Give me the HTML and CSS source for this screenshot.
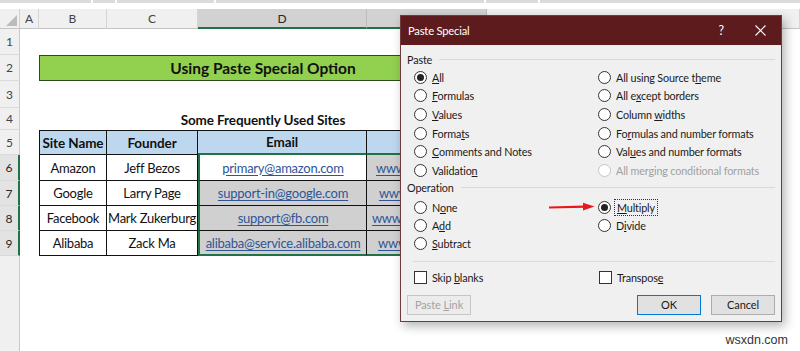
FILE: index.html
```html
<!DOCTYPE html>
<html>
<head>
<meta charset="utf-8">
<link rel="stylesheet" href="styles.css">
</head>
<body>
<div class="screen">
  <div class="topstrip">
    <span class="seg s1"></span><span class="seg s2"></span><span class="seg s3"></span><span class="seg s4"></span><span class="seg s5"></span><span class="seg s6"></span>
  </div>
  <div class="sheet">
    <div class="row hdr-row">
      <div class="corner w-rh"><span class="tri"></span></div>
      <div class="ch w-a">A</div>
      <div class="ch w-b">B</div>
      <div class="ch w-c">C</div>
      <div class="ch w-d sel">D</div>
      <div class="ch w-e sel">E</div>
      <div class="ch w-rest"></div>
    </div>
    <div class="row h1">
      <div class="rh">1</div>
    </div>
    <div class="row h2">
      <div class="rh">2</div>
      <div class="w-a"></div>
      <div class="title">Using Paste Special Option</div>
    </div>
    <div class="row h3">
      <div class="rh">3</div>
    </div>
    <div class="row h4">
      <div class="rh">4</div>
      <div class="w-a"></div>
      <div class="caption">Some Frequently Used Sites</div>
    </div>
    <div class="row h5">
      <div class="rh">5</div>
      <div class="w-a"></div>
      <div class="t th top first w-b">Site Name</div>
      <div class="t th top w-c">Founder</div>
      <div class="t th top w-d sel-b">Email</div>
      <div class="t th top w-e sel-b">Site Link</div>
    </div>
    <div class="row h6">
      <div class="rh rsel">6</div>
      <div class="w-a"></div>
      <div class="t first w-b">Amazon</div>
      <div class="t w-c">Jeff Bezos</div>
      <div class="t w-d sel-l"><span class="link">primary@amazon.com</span></div>
      <div class="t g w-e"><span class="link">www.amazon.com</span></div>
    </div>
    <div class="row h7">
      <div class="rh rsel">7</div>
      <div class="w-a"></div>
      <div class="t first w-b">Google</div>
      <div class="t w-c">Larry Page</div>
      <div class="t g w-d sel-l"><span class="link">support-in@google.com</span></div>
      <div class="t g w-e"><span class="link">www.google.com</span></div>
    </div>
    <div class="row h8">
      <div class="rh rsel">8</div>
      <div class="w-a"></div>
      <div class="t first w-b">Facebook</div>
      <div class="t w-c">Mark Zukerburg</div>
      <div class="t g w-d sel-l"><span class="link">support@fb.com</span></div>
      <div class="t g w-e"><span class="link">www.facebook.com</span></div>
    </div>
    <div class="row h9">
      <div class="rh rsel">9</div>
      <div class="w-a"></div>
      <div class="t first w-b">Alibaba</div>
      <div class="t w-c">Zack Ma</div>
      <div class="t g w-d sel-l sel-b"><span class="link">alibaba@service.alibaba.com</span></div>
      <div class="t g w-e sel-b"><span class="link">www.alibaba.com</span></div>
    </div>
    <div class="row filler">
      <div class="rh"></div>
    </div>
  </div>

  <div class="dialog">
    <div class="dlg-title">
      <span class="dlg-name">Paste Special</span>
      <span class="help">?</span>
      <svg class="close" width="11" height="11" viewBox="0 0 11 11"><path d="M0.5 0.5 L10.5 10.5 M10.5 0.5 L0.5 10.5" stroke="#fff" stroke-width="1.1" fill="none"/></svg>
    </div>
    <div class="dlg-body">
      <div class="group-label">Paste</div>
      <div class="opts paste">
        <div class="opt"><span class="radio on"></span><span><u>A</u>ll</span></div>
        <div class="opt"><span class="radio"></span><span><u>F</u>ormulas</span></div>
        <div class="opt"><span class="radio"></span><span><u>V</u>alues</span></div>
        <div class="opt"><span class="radio"></span><span>Forma<u>t</u>s</span></div>
        <div class="opt"><span class="radio"></span><span><u>C</u>omments and Notes</span></div>
        <div class="opt"><span class="radio"></span><span>Validatio<u>n</u></span></div>
        <div class="opt"><span class="radio"></span><span>All using Source t<u>h</u>eme</span></div>
        <div class="opt"><span class="radio"></span><span>All e<u>x</u>cept borders</span></div>
        <div class="opt"><span class="radio"></span><span>Column <u>w</u>idths</span></div>
        <div class="opt"><span class="radio"></span><span>Fo<u>r</u>mulas and number formats</span></div>
        <div class="opt"><span class="radio"></span><span>Val<u>u</u>es and number formats</span></div>
        <div class="opt disabled"><span class="radio"></span><span>All mer<u>g</u>ing conditional formats</span></div>
      </div>
      <div class="group-label">Operation</div>
      <div class="opts op">
        <div class="opt"><span class="radio"></span><span>N<u>o</u>ne</span></div>
        <div class="opt"><span class="radio"></span><span>A<u>d</u>d</span></div>
        <div class="opt"><span class="radio"></span><span><u>S</u>ubtract</span></div>
        <div class="opt"><span class="radio on"></span><span class="focus"><u>M</u>ultiply</span></div>
        <div class="opt"><span class="radio"></span><span>D<u>i</u>vide</span></div>
        <svg class="arrow" width="46" height="10" viewBox="0 0 46 10"><path d="M0 5.5 L36 4.6" stroke="#e8171b" stroke-width="2.2" fill="none"/><path d="M34 0.8 L45.5 4.6 L34 8.6 Z" fill="#e8171b"/></svg>
      </div>
      <div class="sep"></div>
      <div class="checks">
        <div class="opt"><span class="check"></span><span>Skip <u>b</u>lanks</span></div>
        <div class="opt"><span class="check"></span><span>Transpos<u>e</u></span></div>
      </div>
      <div class="buttons">
        <button class="btn disabled">Paste <u>L</u>ink</button>
        <span class="spacer"></span>
        <button class="btn default">OK</button>
        <button class="btn">Cancel</button>
      </div>
    </div>
  </div>

  <div class="watermark">wsxdn.com</div>
</div>
</body>
</html>
```

FILE: styles.css
```css
* { box-sizing: border-box; }
html, body { margin: 0; padding: 0; }
body {
  width: 800px;
  height: 351px;
  overflow: hidden;
  background: #ffffff;
  font-family: Lato, "Open Sans", sans-serif;
}
.screen {
  position: relative;
  width: 800px;
  height: 351px;
  display: flex;
  flex-direction: column;
}

/* top strip */
.topstrip {
  height: 9px;
  display: flex;
  gap: 2px;
  align-items: flex-start;
  flex: none;
}
.seg { height: 3px; background: #dcdcdc; display: block; }
.s1 { width: 91px; }
.s2 { width: 22px; }
.s3 { width: 97px; }
.s4 { width: 268px; }
.s5 { width: 52px; }
.s6 { flex: 1; }

/* sheet */
.sheet { flex: 1; display: flex; flex-direction: column; }
.row { display: flex; flex: none; }
.hdr-row { height: 20px; }
.h1 { height: 26px; }
.h2 { height: 26px; }
.h3 { height: 27px; }
.h4 { height: 22px; }
.h5 { height: 25px; }
.h6 { height: 26px; }
.h7 { height: 25px; }
.h8 { height: 25px; }
.h9 { height: 25px; }
.filler { flex: 1; }

.w-rh { width: 20px; flex: none; }
.w-a { width: 19px; flex: none; }
.w-b { width: 68px; flex: none; }
.w-c { width: 91px; flex: none; }
.w-d { width: 169px; flex: none; }
.w-e { width: 120px; flex: none; }
.w-rest { flex: 1; }

.corner {
  background: #f0f0f0;
  border-right: 1px solid #d0d0d0;
  border-bottom: 1px solid #c4c4c4;
  display: flex;
  align-items: flex-end;
  justify-content: flex-end;
  padding: 0 2px 2px 0;
}
.tri {
  width: 11px;
  height: 11px;
  background: #bcbcbc;
  clip-path: polygon(100% 0, 100% 100%, 0 100%);
}
.ch {
  background: #f0f0f0;
  border-right: 1px solid #d4d4d4;
  border-bottom: 1px solid #c4c4c4;
  font-size: 12px;
  color: #444;
  display: flex;
  align-items: center;
  justify-content: center;
}
.ch.sel {
  background: #d2d2d2;
  border-bottom: 2px solid #217346;
  color: #262626;
  border-right-color: #bdbdbd;
}
.rh {
  width: 20px;
  flex: none;
  background: #f0f0f0;
  border-right: 1px solid #c8c8c8;
  border-bottom: 1px solid #dadada;
  font-size: 12px;
  color: #444;
  display: flex;
  align-items: center;
  justify-content: center;
}
.filler .rh { border-bottom: none; }
.rh.rsel {
  background: #e3e3e3;
  border-right: 2px solid #217346;
  color: #262626;
}

.title {
  width: 448px;
  flex: none;
  background: #92d050;
  border: 1px solid #2e4a1e;
  font-weight: 700;
  font-size: 15.5px;
  color: #111;
  display: flex;
  align-items: center;
  justify-content: center;
}
.caption {
  width: 448px;
  flex: none;
  font-weight: 700;
  font-size: 13.5px;
  letter-spacing: -0.1px;
  color: #111;
  display: flex;
  align-items: center;
  justify-content: center;
  padding-top: 1px;
}

.t {
  border-right: 1px solid #111;
  border-bottom: 1px solid #111;
  font-size: 13px;
  letter-spacing: -0.25px;
  color: #111;
  display: flex;
  align-items: center;
  justify-content: center;
  white-space: nowrap;
  overflow: hidden;
  background: #fff;
}
.t.first { border-left: 1px solid #111; }
.t.top { border-top: 1px solid #111; }
.th { background: #bdd7ee; font-weight: 700; font-size: 13.5px; letter-spacing: -0.1px; }
.t.g { background: #d0d0d0; }
.t.sel-l { border-left: 2px solid #217346; }
.t.sel-b { border-bottom: 2px solid #217346; }
.link { color: #2f5597; text-decoration: underline; text-underline-offset: 2px; }

/* dialog */
.dialog {
  position: absolute;
  left: 400px;
  top: 15px;
  width: 382px;
  height: 307px;
  background: #f0f0f0;
  border: 1px solid #6e3a3b;
  box-shadow: 3px 4px 10px rgba(0, 0, 0, 0.3);
  display: flex;
  flex-direction: column;
  font-family: Lato, "Open Sans", sans-serif;
  font-size: 10.8px;
  letter-spacing: -0.15px;
  line-height: 13px;
  color: #1a1a1a;
}
.dlg-title {
  height: 29px;
  flex: none;
  background: #5e1b1d;
  color: #fff;
  display: flex;
  align-items: center;
  padding-left: 7px;
  font-size: 11.2px;
  letter-spacing: -0.2px;
}
.dlg-name { flex: 1; }
.help { margin-right: 31px; font-size: 12.5px; }
.close { margin-right: 15px; }

.dlg-body {
  flex: 1;
  display: flex;
  flex-direction: column;
  padding: 0 6px 0 6px;
}
.group-label {
  display: flex;
  align-items: center;
  height: 14px;
  gap: 7px;
}
.group-label::after {
  content: "";
  flex: 1;
  border-top: 1px solid #d9d9d9;
}
.group-label:first-child { margin-top: 7px; }

.opts {
  display: grid;
  grid-template-columns: 184px 1fr;
  grid-auto-flow: column;
  margin-left: 7px;
  position: relative;
}
.paste {
  grid-template-rows: repeat(6, 18.6px);
  margin-top: 2px;
  margin-bottom: 1px;
}
.op {
  grid-template-rows: repeat(3, 18px);
  margin-top: 4px;
}
.opt {
  display: flex;
  align-items: center;
  gap: 5px;
  white-space: nowrap;
}
.opt u { text-underline-offset: 1px; }
.radio {
  width: 13px;
  height: 13px;
  border: 1px solid #333;
  border-radius: 50%;
  background: #fff;
  display: flex;
  align-items: center;
  justify-content: center;
  flex: none;
}
.radio.on::after {
  content: "";
  width: 7px;
  height: 7px;
  border-radius: 50%;
  background: #222;
}
.opt.disabled { color: #a0a0a0; }
.opt.disabled .radio { border-color: #c4c4c4; }
.focus {
  outline: 1px dotted #333;
  outline-offset: 1px;
  padding: 0 1px;
}
.arrow {
  position: absolute;
  left: 135px;
  top: 3px;
}

.sep {
  height: 1px;
  background: #dadada;
  margin: 8px 0 0 6px;
  flex: none;
}
.checks {
  display: grid;
  grid-template-columns: 185px 1fr;
  height: 18px;
  margin: 7px 0 0 7px;
}
.check {
  width: 13px;
  height: 13px;
  border: 1px solid #333;
  background: #fff;
  flex: none;
}
.buttons {
  display: flex;
  gap: 10px;
  margin-top: 8px;
}
.spacer { flex: 1; }
.btn {
  width: 64px;
  height: 20px;
  border: 1px solid #adadad;
  background: #e1e1e1;
  font-family: Lato, "Open Sans", sans-serif;
  font-size: 11px;
  letter-spacing: -0.1px;
  color: #1a1a1a;
  padding: 0;
}
.btn.default { border-color: #0078d7; }
.btn.disabled { color: #a3a3a3; border-color: #c6c6c6; background: #ececec; }

.watermark {
  position: absolute;
  right: 12px;
  top: 333px;
  font-family: "Liberation Sans", Arial, sans-serif;
  font-size: 12.5px;
  color: #333;
}
```
